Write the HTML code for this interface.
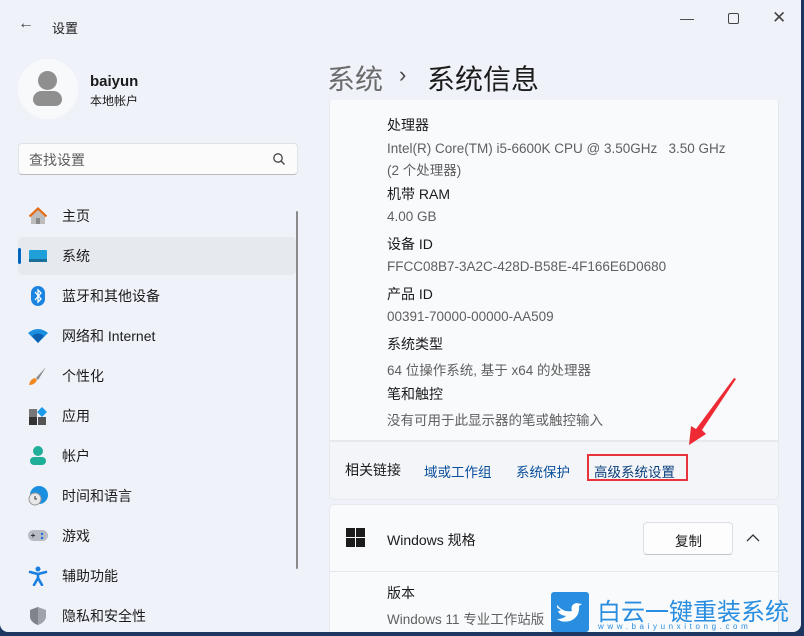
<!DOCTYPE html>
<html><head><meta charset="utf-8"><style>
body{margin:0;width:804px;height:636px;overflow:hidden;background:#1c3660;font-family:"Liberation Sans","Noto Sans CJK SC",sans-serif;color:#1b1b1b}
.win{position:absolute;left:0;top:0;width:801px;height:632px;background:#eff3f9;border-radius:0 0 8px 8px;overflow:hidden}
.t{position:absolute;white-space:nowrap}
.nav{position:absolute;left:18px;width:278px;height:38px;border-radius:5px}
.nav .i{position:absolute;left:10px;top:9px;width:20px;height:20px}
.nav .l{position:absolute;left:44px;top:9px;font-size:14px}
.card{position:absolute;left:329px;width:448px;background:#f9fafc;border:1px solid #e5e8ec;border-radius:5px}
.lb{font-size:14px;color:#1b1b1b}
.vl{font-size:13.5px;color:#5f5f5f}
</style></head><body>
<div class="win">
<div class="t" style="left:18px;top:15px;font-size:16px;color:#444">&#8592;</div>
<div class="t" style="left:52px;top:18px;font-size:13px">设置</div>
<div class="t" style="left:680px;top:10px;font-size:14px;color:#444">&#8212;</div>
<div style="position:absolute;left:728px;top:13px;width:9px;height:9px;border:1px solid #444;border-radius:2px"></div>
<div class="t" style="left:772px;top:8px;font-size:17px;color:#444">&#10005;</div>

<div style="position:absolute;left:18px;top:59px;width:60px;height:60px;border-radius:50%;background:#f8f9fb"></div>
<div style="position:absolute;left:38px;top:71px;width:19px;height:19px;border-radius:50%;background:#8f8f8f"></div>
<div style="position:absolute;left:33px;top:91px;width:29px;height:15px;border-radius:9px 9px 7px 7px;background:#8f8f8f"></div>
<div class="t" style="left:90px;top:73px;font-size:15px;font-weight:bold">baiyun</div>
<div class="t" style="left:90px;top:92px;font-size:12px">本地帐户</div>

<div style="position:absolute;left:18px;top:143px;width:278px;height:30px;background:#fbfbfc;border:1px solid #dfe2e6;border-bottom-color:#bbb;border-radius:4px"></div>
<div class="t" style="left:29px;top:150px;font-size:14px;color:#5d5d5d">查找设置</div>
<svg style="position:absolute;left:272px;top:152px" width="14" height="14"><circle cx="6" cy="6" r="4.2" fill="none" stroke="#444" stroke-width="1.3"/><line x1="9" y1="9" x2="12.5" y2="12.5" stroke="#444" stroke-width="1.3"/></svg>

<div style="position:absolute;left:296px;top:211px;width:2px;height:358px;background:#8a8a8a;border-radius:1px"></div>

<div class="nav" style="top:197px"><svg class="i" viewBox="0 0 20 20"><path d="M3 10L10 3L17 10V18H3Z" fill="#bdbdbd"/><path d="M1.5 10.5L10 2.5L18.5 10.5" fill="none" stroke="#e86a10" stroke-width="2.2"/><rect x="8" y="12" width="4" height="6" fill="#8a8a8a"/></svg><div class="l">主页</div></div>
<div class="nav" style="top:237px;background:#e6e9ee"><div style="position:absolute;left:0;top:11px;width:3px;height:16px;border-radius:2px;background:#0067c0"></div><svg class="i" viewBox="0 0 20 20"><rect x="1" y="4" width="18" height="12" rx="1" fill="#1fa0d8"/><rect x="1" y="13" width="18" height="3" fill="#1a6f9a"/></svg><div class="l">系统</div></div>
<div class="nav" style="top:277px"><svg class="i" viewBox="0 0 20 20"><rect x="3" y="0" width="14" height="20" rx="7" fill="#1a84e0"/><path d="M7 6L13 13L10 16V4L13 7L7 14" fill="none" stroke="#fff" stroke-width="1.3"/></svg><div class="l">蓝牙和其他设备</div></div>
<div class="nav" style="top:317px"><svg class="i" viewBox="0 0 20 20"><path d="M0 7Q10 -1 20 7L10 17Z" fill="#1a8fe0"/><path d="M4 10Q10 5 16 10L10 17Z" fill="#0d5fb0"/></svg><div class="l">网络和 Internet</div></div>
<div class="nav" style="top:357px"><svg class="i" viewBox="0 0 20 20"><path d="M18 1L8 12L10 14Z" fill="#888"/><path d="M7 12Q2 13 1 19Q7 19 9 14Z" fill="#f08a20"/></svg><div class="l">个性化</div></div>
<div class="nav" style="top:397px"><svg class="i" viewBox="0 0 20 20"><rect x="1" y="3" width="8" height="8" fill="#777"/><rect x="1" y="11" width="8" height="8" fill="#333"/><rect x="10" y="11" width="8" height="8" fill="#555"/><path d="M14 1L19 6L14 11L9 6Z" fill="#1a9ae8"/></svg><div class="l">应用</div></div>
<div class="nav" style="top:437px"><svg class="i" viewBox="0 0 20 20"><circle cx="10" cy="5" r="5" fill="#1fae98"/><rect x="2" y="11" width="16" height="8" rx="4" fill="#1fae98"/></svg><div class="l">帐户</div></div>
<div class="nav" style="top:477px"><svg class="i" viewBox="0 0 20 20"><circle cx="11" cy="9" r="9" fill="#1a8fe0"/><circle cx="7" cy="13" r="6" fill="#e8e8e8" stroke="#999"/><path d="M7 10V13H9" fill="none" stroke="#333"/></svg><div class="l">时间和语言</div></div>
<div class="nav" style="top:517px"><svg class="i" viewBox="0 0 20 20"><rect x="0" y="4" width="20" height="11" rx="5.5" fill="#b8bcc4"/><path d="M3 9.5H7M5 7.5V11.5" stroke="#333"/><circle cx="14" cy="8" r="1.2" fill="#1a6fe0"/><circle cx="14" cy="12" r="1.2" fill="#1a6fe0"/></svg><div class="l">游戏</div></div>
<div class="nav" style="top:557px"><svg class="i" viewBox="0 0 20 20"><circle cx="10" cy="3" r="2.5" fill="#1a7fe0"/><path d="M2 6L10 8L18 6M10 8V12M10 12L6 19M10 12L14 19" fill="none" stroke="#1a7fe0" stroke-width="2.6" stroke-linecap="round"/></svg><div class="l">辅助功能</div></div>
<div class="nav" style="top:597px"><svg class="i" viewBox="0 0 20 20"><path d="M10 1L18 4V10Q18 16 10 19Q2 16 2 10V4Z" fill="#a0a4aa"/><path d="M10 1V19Q2 16 2 10V4Z" fill="#7f848a"/></svg><div class="l">隐私和安全性</div></div>

<div class="t" style="left:327px;top:58px;font-size:28px;color:#6b6b6b">系统</div>
<div class="t" style="left:399px;top:62px;font-size:22px;color:#444">&#8250;</div>
<div class="t" style="left:427px;top:58px;font-size:28px">系统信息</div>

<div class="card" style="top:100px;height:340px;border-radius:0;border-top:none"></div>
<div class="t lb" style="left:387px;top:115px">处理器</div>
<div class="t vl" style="left:387px;top:141px">Intel(R) Core(TM) i5-6600K CPU @ 3.50GHz &nbsp; 3.50 GHz</div>
<div class="t vl" style="left:387px;top:159px">(2 个处理器)</div>
<div class="t lb" style="left:387px;top:184px">机带 RAM</div>
<div class="t vl" style="left:387px;top:209px">4.00 GB</div>
<div class="t lb" style="left:387px;top:234px">设备 ID</div>
<div class="t vl" style="left:387px;top:259px">FFCC08B7-3A2C-428D-B58E-4F166E6D0680</div>
<div class="t lb" style="left:387px;top:284px">产品 ID</div>
<div class="t vl" style="left:387px;top:309px">00391-70000-00000-AA509</div>
<div class="t lb" style="left:387px;top:334px">系统类型</div>
<div class="t vl" style="left:387px;top:359px">64 位操作系统, 基于 x64 的处理器</div>
<div class="t lb" style="left:387px;top:384px">笔和触控</div>
<div class="t vl" style="left:387px;top:409px">没有可用于此显示器的笔或触控输入</div>

<div class="card" style="top:441px;height:57px;background:#f3f5f8;border-radius:0 0 5px 5px"></div>
<div class="t" style="left:345px;top:460px;font-size:14px">相关链接</div>
<div class="t" style="left:424px;top:461px;font-size:13.5px;color:#0a4f9c">域或工作组</div>
<div class="t" style="left:516px;top:461px;font-size:13.5px;color:#0a4f9c">系统保护</div>
<div style="position:absolute;left:587px;top:454px;width:101px;height:27px;border:2px solid #e8333a;box-sizing:border-box"></div>
<div class="t" style="left:594px;top:461px;font-size:13.5px;color:#0a3f7c">高级系统设置</div>
<svg style="position:absolute;left:0;top:0" width="804" height="636"><path d="M736 379L702 430L706 434L689 445L691 426L696 429L734 378Z" fill="#ee2a35"/></svg>

<div class="card" style="top:504px;height:140px"></div>
<svg style="position:absolute;left:346px;top:528px" width="20" height="20"><rect x="0" y="0" width="9" height="9" fill="#1b1b1b"/><rect x="10" y="0" width="9" height="9" fill="#1b1b1b"/><rect x="0" y="10" width="9" height="9" fill="#1b1b1b"/><rect x="10" y="10" width="9" height="9" fill="#1b1b1b"/></svg>
<div class="t" style="left:387px;top:530px;font-size:14px">Windows 规格</div>
<div style="position:absolute;left:643px;top:522px;width:88px;height:31px;background:#fdfdfd;border:1px solid #dcdfe3;border-bottom-color:#c4c4c4;border-radius:4px"></div>
<div class="t" style="left:675px;top:530px;font-size:13.5px">复制</div>
<svg style="position:absolute;left:746px;top:533px" width="14" height="10"><path d="M1 8L7 2L13 8" fill="none" stroke="#333" stroke-width="1.3"/></svg>
<div style="position:absolute;left:329px;top:571px;width:449px;height:1px;background:#e5e8ec"></div>
<div class="t" style="left:387px;top:583px;font-size:14px">版本</div>
<div class="t vl" style="left:387px;top:608px">Windows 11 专业工作站版</div>

<div style="position:absolute;left:551px;top:592px;width:38px;height:40px;background:#2a8ee0;border-radius:3px"></div>
<svg style="position:absolute;left:554px;top:597px" width="32" height="28"><path d="M3 8Q10 16 18 14Q16 8 22 6L28 7L25 9Q26 20 16 24Q8 26 3 22Q9 22 12 19Q5 18 4 14Q6 14 7 13Q2 11 3 8Z" fill="#fff"/></svg>
<div class="t" style="left:597px;top:592px;font-size:24px;color:#2a8ee0">白云一键重装系统</div>
<div class="t" style="left:598px;top:622px;font-size:8px;color:#2a8ee0;letter-spacing:3.6px">www.baiyunxitong.com</div>
</div>
</body></html>
